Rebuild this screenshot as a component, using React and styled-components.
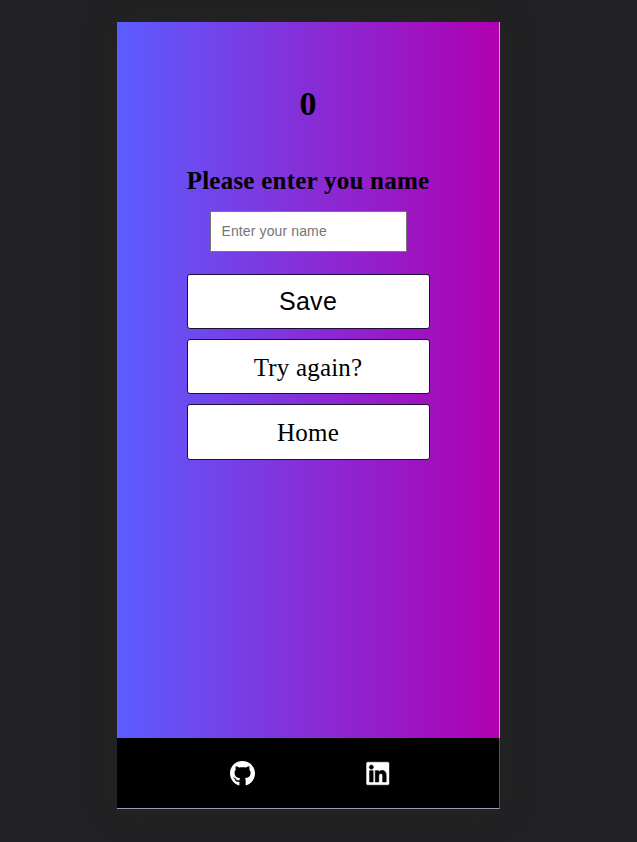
import React from "react";
import styled, { createGlobalStyle, css } from "styled-components";
import { FaGithub, FaLinkedin } from "react-icons/fa";

const GlobalStyle = createGlobalStyle`
  * { box-sizing: border-box; }
  body {
    margin: 0;
    background: #212123;
    font-family: "Liberation Serif", "Times New Roman", serif;
    color: #000;
  }
`;

const Page = styled.div`
  height: 842px;
  padding: 22px 0 0 117px;
  overflow: hidden;
`;

const Phone = styled.div`
  width: 383px;
  height: 787px;
  display: flex;
  flex-direction: column;
  border-right: 1px solid #e391df;
  background: linear-gradient(90deg, #5c5cff, #b000b0);
  box-shadow: 0 0 24px rgba(38, 38, 38, 0.6);
`;

const Content = styled.main`
  flex: 1;
  display: flex;
  flex-direction: column;
  align-items: center;
`;

const Score = styled.h1`
  margin: 62px 0 0;
  font-size: 34px;
  line-height: 40px;
`;

const Title = styled.h2`
  margin: 42px 0 0;
  font-size: 25px;
  line-height: 30px;
  letter-spacing: 0.24px;
  white-space: nowrap;
`;

const NameInput = styled.input`
  width: 197px;
  height: 41px;
  margin: 15px 0 22px;
  padding: 0 11px 2px;
  border: 1px solid #767676;
  border-radius: 0;
  font-family: "Liberation Sans", Arial, sans-serif;
  font-size: 14px;
  letter-spacing: 0.12px;
  &::placeholder { color: #757575; }
`;

const buttonFace = css`
  width: 243px;
  height: 55px;
  margin: 0 0 10px;
  padding: 0;
  display: flex;
  align-items: center;
  justify-content: center;
  border: 1px solid #1c1038;
  border-radius: 3px;
  background: #fff;
  color: #000;
  text-decoration: none;
`;

const SaveButton = styled.button`
  ${buttonFace}
  font-family: "Liberation Sans", Arial, sans-serif;
  font-size: 25px;
  letter-spacing: 0.3px;
`;

const LinkButton = styled.a`
  ${buttonFace}
  height: 55.4px;
  padding-top: 2px;
  font-size: 25px;
  letter-spacing: 0.2px;
`;

const Footer = styled.footer`
  height: 71px;
  margin-right: -1px;
  padding-left: 3px;
  display: flex;
  justify-content: center;
  align-items: center;
  gap: 111px;
  border-right: 1px solid #704068;
  border-bottom: 1px solid #a893b8;
  background: #000;
  color: #fff;
`;

const SocialLink = styled.a`
  display: flex;
  color: inherit;
  svg {
    width: ${({ $width }) => $width}px;
    height: 27px;
    overflow: visible;
  }
  path {
    stroke: #000;
    stroke-width: ${({ $outline = 0 }) => $outline}px;
  }
`;

export default function App() {
  return (
    <Page>
      <GlobalStyle />
      <Phone>
        <Content>
          <Score>0</Score>
          <Title>Please enter you name</Title>
          <NameInput placeholder="Enter your name" />
          <SaveButton>Save</SaveButton>
          <LinkButton>Try again?</LinkButton>
          <LinkButton>Home</LinkButton>
        </Content>
        <Footer>
          <SocialLink $width={25} aria-label="GitHub"><FaGithub /></SocialLink>
          <SocialLink $width={23.5} $outline={12} aria-label="LinkedIn"><FaLinkedin /></SocialLink>
        </Footer>
      </Phone>
    </Page>
  );
}
